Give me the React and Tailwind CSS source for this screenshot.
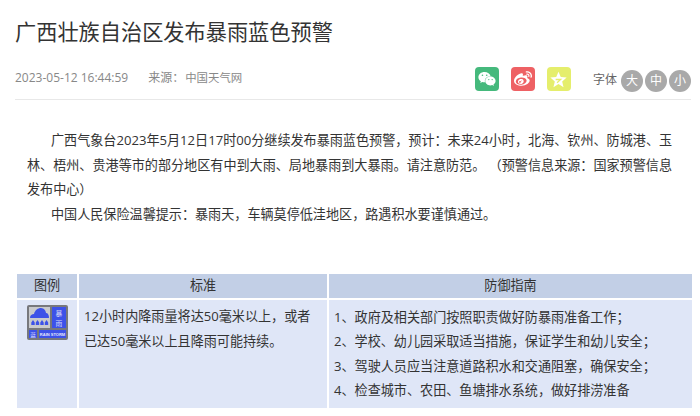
import React from 'react';
import { FaWeixin, FaWeibo } from 'react-icons/fa';

const font = "font-['Open_Sans','Noto_Sans_CJK_SC',sans-serif]";

const guide = [
    '1、政府及相关部门按照职责做好防暴雨准备工作；',
    '2、学校、幼儿园采取适当措施，保证学生和幼儿安全；',
    '3、驾驶人员应当注意道路积水和交通阻塞，确保安全；',
    '4、检查城市、农田、鱼塘排水系统，做好排涝准备',
];

function StormIcon() {
    return (
        <svg width="41" height="35" viewBox="0 0 41 35">
            <rect width="41" height="35" rx="2" fill="#77787c" />
            <rect x="2" y="2" width="21" height="21" fill="#c9cacd" />
            <path d="M3 13 C3 10 5 9 7 9 C8 5 11 3 14 3 C17 3 19 6 19 8 C21 8 22 10 22 13 Z" fill="#3d52e8" />
            <path d="M6 15 l1.7 2.5 v2.5 h-3.4 v-2.5 Z M10.5 15 l1.7 2.5 v2.5 h-3.4 v-2.5 Z M15 15 l1.7 2.5 v2.5 h-3.4 v-2.5 Z M19.5 15 l1.7 2.5 v2.5 h-3.4 v-2.5 Z" fill="#3d52e8" />
            <rect x="25" y="2" width="14" height="21" fill="#3d52e8" />
            <text x="32" y="10.5" textAnchor="middle" fontSize="6.8" fill="#d5d8f8" fontFamily="Noto Sans CJK SC">暴</text>
            <text x="32" y="20.5" textAnchor="middle" fontSize="6.8" fill="#d5d8f8" fontFamily="Noto Sans CJK SC">雨</text>
            <rect x="2" y="25" width="8" height="8" fill="#3d52e8" />
            <text x="6" y="31.5" textAnchor="middle" fontSize="6" fill="#d5d8f8" fontFamily="Noto Sans CJK SC">蓝</text>
            <rect x="12" y="25" width="27" height="8" fill="#3d52e8" />
            <text x="25.5" y="30.5" textAnchor="middle" fontSize="4" fontWeight="700" fill="#e4e6fb" fontFamily="Liberation Sans">RAIN STORM</text>
        </svg>
    );
}

function ShareButton({ bg, children }) {
    return <div className={`w-[24px] h-[24px] rounded-[4px] flex items-center justify-center text-white ${bg}`}>{children}</div>;
}

function SizeButton({ label }) {
    return <div className="w-[22px] h-[22px] rounded-full bg-[#a9a9a9] text-white text-[12px] flex items-center justify-center">{label}</div>;
}

export default function App() {
    return (
        <div className={`w-[700px] h-[416px] overflow-hidden bg-white text-[#333] ${font}`}>
            <div className="pl-[15px] pr-[9px]">
                <h1 className="text-[21.2px] leading-[30px] pt-[17px] text-[#333]">广西壮族自治区发布暴雨蓝色预警</h1>
                <div className="flex items-center h-[53px] pt-[10px] border-b border-[#e8e8e8] text-[12px] text-[#888]">
                    <span>2023-05-12 16:44:59</span>
                    <span className="ml-[20px]">来源：</span>
                    <span className="ml-[1px] text-[11.4px]">中国天气网</span>
                    <div className="ml-auto flex items-center">
                        <div className="flex gap-[12px] mr-[22px] mt-[2px]">
                            <ShareButton bg="bg-[#45b97c]"><FaWeixin size={18} /></ShareButton>
                            <ShareButton bg="bg-[#ee6164]"><FaWeibo size={18} /></ShareButton>
                            <ShareButton bg="bg-[#e5ee6c]">
                                <svg width="17" height="17" viewBox="0 0 24 24" fill="#fff">
                                    <path d="M12 1 L15.2 8.6 L23.5 9.3 L17.2 14.7 L19.1 22.8 L12 18.5 L4.9 22.8 L6.8 14.7 L0.5 9.3 L8.8 8.6 Z" />
                                    <path d="M8 12 L15 12 L10 16.5" fill="none" stroke="#e5ee6c" strokeWidth="1.8" />
                                </svg>
                            </ShareButton>
                        </div>
                        <span className="text-[#666] mr-[4px] mt-[3px]">字体</span>
                        <div className="flex gap-[2px] mt-[5px]">
                            <SizeButton label="大" />
                            <SizeButton label="中" />
                            <SizeButton label="小" />
                        </div>
                    </div>
                </div>
            </div>
            <div className="pl-[27px] pr-[20px] pt-[28px] text-[13.1px] leading-[24.5px]">
                <p className="indent-[24px]">广西气象台2023年5月12日17时00分继续发布暴雨蓝色预警，预计：未来24小时，北海、钦州、防城港、玉林、梧州、贵港等市的部分地区有中到大雨、局地暴雨到大暴雨。请注意防范。 （预警信息来源：国家预警信息发布中心）</p>
                <p className="indent-[24px]">中国人民保险温馨提示：暴雨天，车辆莫停低洼地区，路遇积水要谨慎通过。</p>
            </div>
            <div className="ml-[17px] w-[675px] mt-[48px] grid grid-cols-[60px_248px_1fr] grid-rows-[24px_108px] gap-[2px] text-[13.1px]">
                <div className="bg-[#c2cfe6] flex items-center justify-center">图例</div>
                <div className="bg-[#c2cfe6] flex items-center justify-center">标准</div>
                <div className="bg-[#c2cfe6] flex items-center justify-center">防御指南</div>
                <div className="bg-[#dfe6f7] flex justify-center items-start pt-[5px]"><StormIcon /></div>
                <div className="bg-[#dfe6f7] pl-[5px] pr-[6px] pt-[4px] leading-[25px]">12小时内降雨量将达50毫米以上，或者已达50毫米以上且降雨可能持续。</div>
                <div className="bg-[#dfe6f7] pl-[5px] pt-[5px] leading-[24.3px]">
                    {guide.map((line) => <div key={line}>{line}</div>)}
                </div>
            </div>
        </div>
    );
}
